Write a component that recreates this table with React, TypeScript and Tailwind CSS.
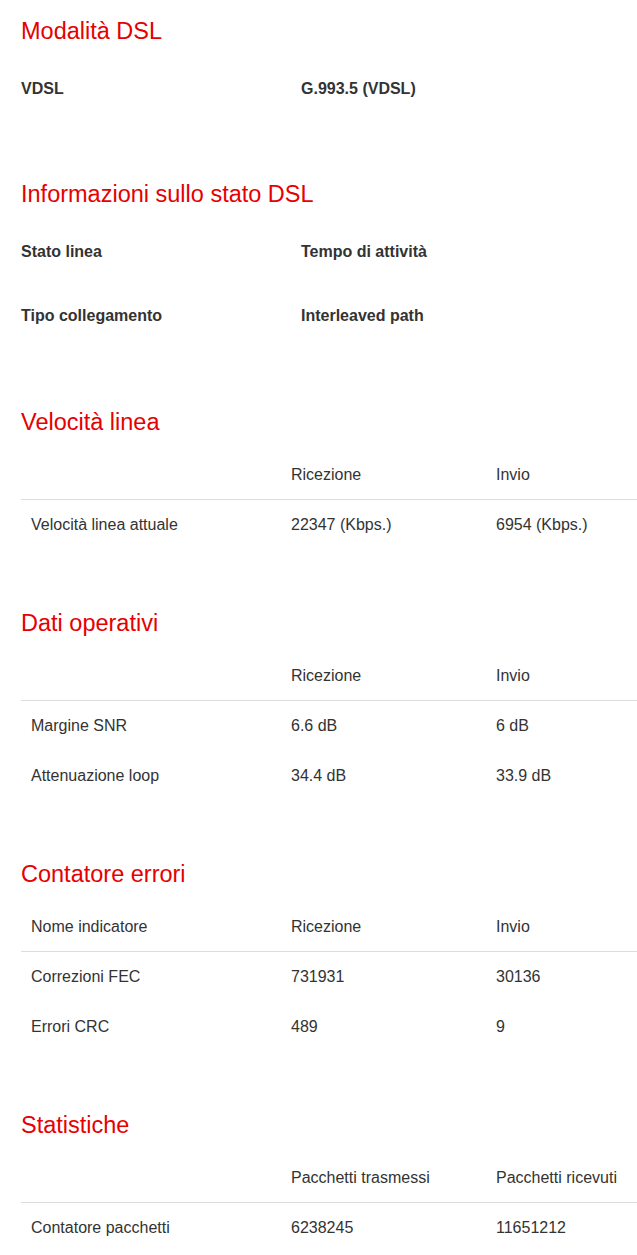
const font = { fontFamily: '"Liberation Sans", Arial, sans-serif' }

type KV = [string, string]

const modalita: KV[] = [['VDSL', 'G.993.5 (VDSL)']]

const stato: KV[] = [
  ['Stato linea', 'Tempo di attività'],
  ['Tipo collegamento', 'Interleaved path'],
]

const tables = [
  {
    title: 'Velocità linea',
    head: ['', 'Ricezione', 'Invio'],
    rows: [['Velocità linea attuale', '22347 (Kbps.)', '6954 (Kbps.)']],
  },
  {
    title: 'Dati operativi',
    head: ['', 'Ricezione', 'Invio'],
    rows: [
      ['Margine SNR', '6.6 dB', '6 dB'],
      ['Attenuazione loop', '34.4 dB', '33.9 dB'],
    ],
  },
  {
    title: 'Contatore errori',
    head: ['Nome indicatore', 'Ricezione', 'Invio'],
    rows: [
      ['Correzioni FEC', '731931', '30136'],
      ['Errori CRC', '489', '9'],
    ],
  },
  {
    title: 'Statistiche',
    head: ['', 'Pacchetti trasmessi', 'Pacchetti ricevuti'],
    rows: [['Contatore pacchetti', '6238245', '11651212']],
  },
]

function Heading({ children }: { children: string }) {
  return <h2 className="flex h-8 items-center text-[23.5px] font-normal leading-8 text-[#e60000]">{children}</h2>
}

function KeyValues({ items }: { items: KV[] }) {
  return (
    <div className="mt-[10px]">
      {items.map(([k, v]) => (
        <div key={k} className="grid h-16 grid-cols-[280px_1fr] items-center text-base font-bold text-[#333]">
          <span>{k}</span>
          <span>{v}</span>
        </div>
      ))}
    </div>
  )
}

function Row({ cells, head }: { cells: string[]; head?: boolean }) {
  return (
    <div
      className={`grid h-[50px] grid-cols-[260px_205px_1fr] items-center text-base text-[#333] ${
        head ? 'border-b border-[#dddddd]' : ''
      }`}
    >
      {cells.map((c, i) => (
        <span key={i} className="whitespace-nowrap pl-[10px]">
          {c}
        </span>
      ))}
    </div>
  )
}

export default function App() {
  return (
    <div className="min-h-[1255px] w-[637px] overflow-hidden bg-white pl-[21px] pt-[15px]" style={font}>
      <section>
        <Heading>Modalità DSL</Heading>
        <KeyValues items={modalita} />
      </section>

      <section className="mt-[57px]">
        <Heading>Informazioni sullo stato DSL</Heading>
        <KeyValues items={stato} />
      </section>

      {tables.map((t, i) => (
        <section key={t.title} className={i === 0 ? 'mt-[58px]' : 'mt-[57px]'}>
          <Heading>{t.title}</Heading>
          <div className="mt-[12px]">
            <Row cells={t.head} head />
            {t.rows.map((r) => (
              <Row key={r[0]} cells={r} />
            ))}
          </div>
        </section>
      ))}
    </div>
  )
}
